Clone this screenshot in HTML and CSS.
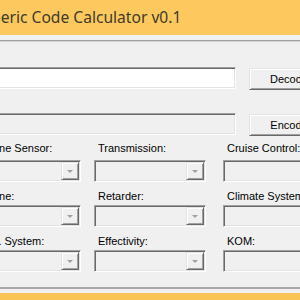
FILE: index.html
```html
<!DOCTYPE html>
<html lang="en">
<head>
  <meta charset="UTF-8">
  <title>Generic Code Calculator v0.1</title>
  <link rel="stylesheet" href="styles.css">
</head>
<body>
  <div class="window">
    <div class="titlebar">Generic Code Calculator v0.1</div>

    <div class="panel">
      <div class="code-row">
        <div class="textbox"></div>
        <button class="btn">Decode</button>
      </div>
      <div class="code-row last">
        <div class="textbox readonly"></div>
        <button class="btn">Encode</button>
      </div>

      <div class="fields">
        <div class="field first">
          <label>Engine Sensor:</label>
          <div class="combo narrow"><span class="drop"></span></div>
        </div>
        <div class="field first">
          <label>Transmission:</label>
          <div class="combo"><span class="drop"></span></div>
        </div>
        <div class="field first">
          <label>Cruise Control:</label>
          <div class="combo"><span class="drop"></span></div>
        </div>

        <div class="field">
          <label>Engine:</label>
          <div class="combo narrow"><span class="drop"></span></div>
        </div>
        <div class="field">
          <label>Retarder:</label>
          <div class="combo"><span class="drop"></span></div>
        </div>
        <div class="field">
          <label>Climate System:</label>
          <div class="combo"><span class="drop"></span></div>
        </div>

        <div class="field">
          <label>Elec. System:</label>
          <div class="combo narrow"><span class="drop"></span></div>
        </div>
        <div class="field">
          <label>Effectivity:</label>
          <div class="combo"><span class="drop"></span></div>
        </div>
        <div class="field">
          <label>KOM:</label>
          <div class="combo"><span class="drop"></span></div>
        </div>
      </div>
    </div>

    <div class="frame-bottom"></div>
  </div>
</body>
</html>
```

FILE: styles.css
```css
body {
  margin: 0;
  background-color: #f0f0f0;
  overflow: hidden;
  font-family: "Liberation Sans", Arial, sans-serif;
  font-size: 11px;
  color: #000;
}
.window {
  margin-left: -40px;
  width: 420px;
}
.titlebar {
  height: 35px;
  line-height: 35px;
  padding-left: 11px;
  background-color: #fdc95e;
  color: #3d3a2b;
  font-family: "Noto Sans", sans-serif;
  font-size: 15.6px;
  white-space: nowrap;
}
.panel {
  margin-top: 5px;
  padding: 26px 0 15px 13px;
  border-top: 1px solid #a0a0a0;
  border-bottom: 2px solid #a8a8a8;
  box-shadow: inset 0 1px 0 #d2d2d2;
}
.code-row {
  display: flex;
  align-items: flex-start;
  gap: 13px;
  margin-bottom: 23px;
}
.code-row.last {
  margin-bottom: 6px;
}
.textbox {
  width: 263px;
  height: 22px;
  box-sizing: border-box;
  background-color: #fff;
  border: 1px solid;
  border-color: #a0a0a0 #fff #fff #a0a0a0;
  box-shadow: inset 1px 1px 0 #696969, inset -1px -1px 0 #e3e3e3;
}
.textbox.readonly {
  background-color: #f0f0f0;
}
.btn {
  width: 80px;
  height: 22px;
  margin-top: 1px;
  padding: 0;
  background-color: #f0f0f0;
  border: 1px solid;
  border-color: #e3e3e3 #696969 #696969 #e3e3e3;
  box-shadow: inset 1px 1px 0 #fff, inset -1px -1px 0 #a0a0a0;
  font: inherit;
  color: #000;
}
.fields {
  display: grid;
  grid-template-columns: 121px 129px 1fr;
  row-gap: 8px;
}
.field label {
  display: block;
  line-height: 13px;
  padding-left: 4px;
  margin-bottom: 2px;
  white-space: nowrap;
}
.field.first label {
  margin-bottom: 5px;
}
.combo {
  width: 112px;
  height: 22px;
  box-sizing: border-box;
  padding: 1px;
  display: flex;
  justify-content: flex-end;
  background-color: #f0f0f0;
  border: 1px solid;
  border-color: #a0a0a0 #fff #fff #a0a0a0;
  box-shadow: inset 1px 1px 0 #696969, inset -1px -1px 0 #e3e3e3;
}
.combo.narrow {
  width: 108px;
}
.drop {
  width: 18px;
  height: 18px;
  box-sizing: border-box;
  display: flex;
  align-items: center;
  justify-content: center;
  background-color: #f0f0f0;
  border: 1px solid;
  border-color: #e3e3e3 #696969 #696969 #e3e3e3;
  box-shadow: inset 1px 1px 0 #fff, inset -1px -1px 0 #a0a0a0;
}
.drop::after {
  content: "";
  border-left: 3px solid transparent;
  border-right: 3px solid transparent;
  border-top: 3px solid #a0a0a0;
}
.frame-bottom {
  margin-top: 4px;
  height: 20px;
  background-color: #f9c453;
}
```
